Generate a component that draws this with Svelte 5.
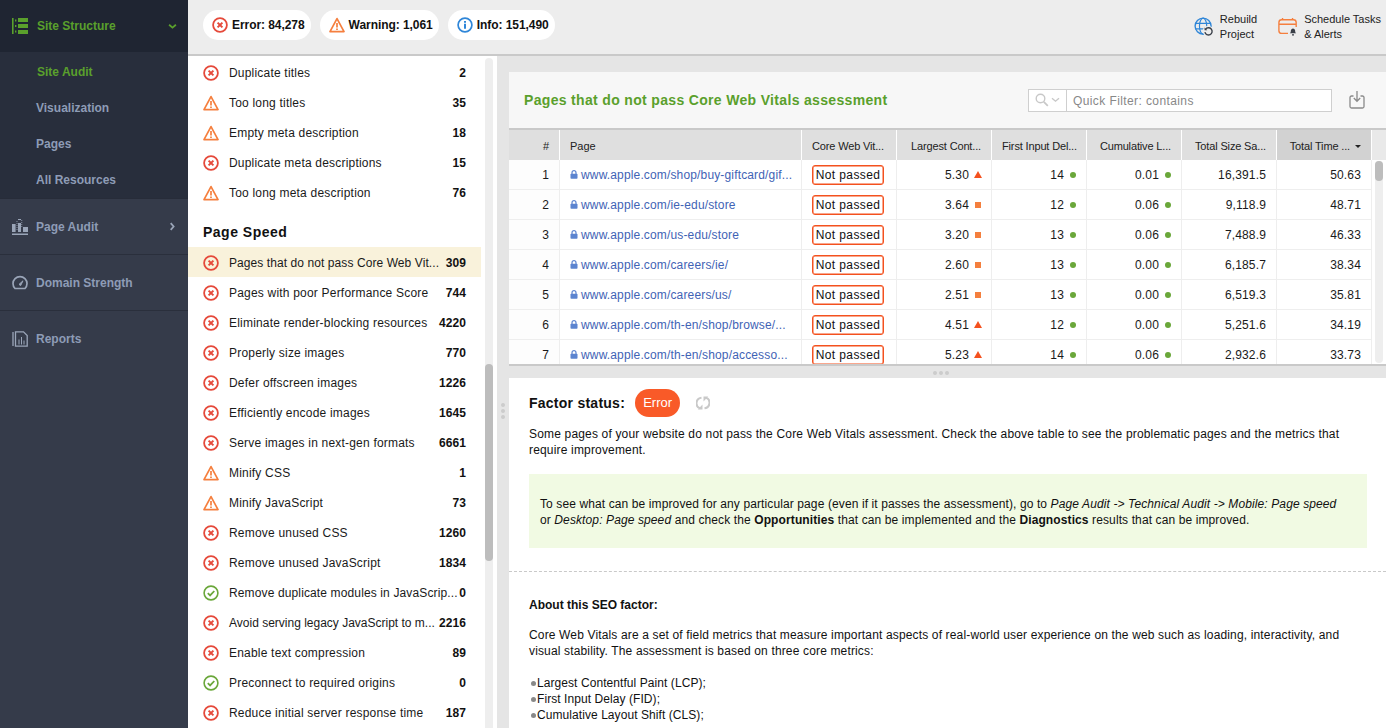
<script>
  const top = [
    { k: 'e', t: 'Duplicate titles', n: '2' },
    { k: 'w', t: 'Too long titles', n: '35' },
    { k: 'w', t: 'Empty meta description', n: '18' },
    { k: 'e', t: 'Duplicate meta descriptions', n: '15' },
    { k: 'w', t: 'Too long meta description', n: '76' }
  ];
  const speed = [
    { k: 'e', t: 'Pages that do not pass Core Web Vit...', n: '309', sel: true, fit: 'tight' },
    { k: 'e', t: 'Pages with poor Performance Score', n: '744' },
    { k: 'e', t: 'Eliminate render-blocking resources', n: '4220' },
    { k: 'e', t: 'Properly size images', n: '770' },
    { k: 'e', t: 'Defer offscreen images', n: '1226' },
    { k: 'e', t: 'Efficiently encode images', n: '1645' },
    { k: 'e', t: 'Serve images in next-gen formats', n: '6661' },
    { k: 'w', t: 'Minify CSS', n: '1' },
    { k: 'w', t: 'Minify JavaScript', n: '73' },
    { k: 'e', t: 'Remove unused CSS', n: '1260' },
    { k: 'e', t: 'Remove unused JavaScript', n: '1834' },
    { k: 'o', t: 'Remove duplicate modules in JavaScrip...', n: '0', fit: 'mid' },
    { k: 'e', t: 'Avoid serving legacy JavaScript to m...', n: '2216', fit: 'none' },
    { k: 'e', t: 'Enable text compression', n: '89' },
    { k: 'o', t: 'Preconnect to required origins', n: '0' },
    { k: 'e', t: 'Reduce initial server response time', n: '187' }
  ];
  const rows = [
    ['www.apple.com/shop/buy-giftcard/gif...', '5.30', 't', '14', '0.01', '16,391.5', '50.63'],
    ['www.apple.com/ie-edu/store', '3.64', 's', '12', '0.06', '9,118.9', '48.71'],
    ['www.apple.com/us-edu/store', '3.20', 's', '13', '0.06', '7,488.9', '46.33'],
    ['www.apple.com/careers/ie/', '2.60', 's', '13', '0.00', '6,185.7', '38.34'],
    ['www.apple.com/careers/us/', '2.51', 's', '13', '0.00', '6,519.3', '35.81'],
    ['www.apple.com/th-en/shop/browse/...', '4.51', 't', '12', '0.00', '5,251.6', '34.19'],
    ['www.apple.com/th-en/shop/accesso...', '5.23', 't', '14', '0.06', '2,932.6', '33.73']
  ];
</script>

{#snippet icon(k)}
  {#if k === 'e'}
    <svg class="ic" viewBox="0 0 16 16"><circle cx="8" cy="8" r="6.900" fill="none" stroke="#e5493a" stroke-width="1.800"/><path d="M5.600 5.600l4.800 4.800M10.400 5.600l-4.800 4.800" stroke="#e5493a" stroke-width="2" fill="none"/></svg>
  {:else if k === 'w'}
    <svg class="ic" viewBox="0 0 16 16"><path d="M8 1.600L15 14.600H1z" fill="none" stroke="#f57f3e" stroke-width="1.700" stroke-linejoin="round"/><path d="M8 6v4.400M8 11.400v1.600" stroke="#f57f3e" stroke-width="1.700" fill="none"/></svg>
  {:else if k === 'o'}
    <svg class="ic" viewBox="0 0 16 16"><circle cx="8" cy="8" r="6.900" fill="none" stroke="#6aa73a" stroke-width="1.600"/><path d="M4.800 8.100l2.300 2.300 4.200-4.400" stroke="#6aa73a" stroke-width="1.800" fill="none"/></svg>
  {:else}
    <svg class="ic" viewBox="0 0 16 16"><circle cx="8" cy="8" r="6.900" fill="none" stroke="#2f86d8" stroke-width="1.700"/><path d="M8 6.800v5M8 4v1.800" stroke="#2f86d8" stroke-width="2" fill="none"/></svg>
  {/if}
{/snippet}

{#snippet row(item)}
  <li class="item" class:sel={item.sel}>
    {@render icon(item.k)}
    <span class="lbl {item.fit ?? ''}">{item.t}</span>
    <b class="num">{item.n}</b>
  </li>
{/snippet}

<div class="app">
  <aside class="side">
    <div class="head">
      <svg class="nic" viewBox="0 0 16 16"><path d="M0 0h1.600v16H0zM3 1.500h1.400v2H3zM3 7h1.400v2H3zM3 12.500h1.400v2H3zM6 0h10v4H6zM6 6h10v4H6zM6 12h10v4H6z" fill="#5aa02c"/></svg>
      <span class="hl">Site Structure</span>
      <svg class="chev" viewBox="0 0 8 6"><path d="M1 1.400l3 2.600 3-2.600" fill="none" stroke="#5aa02c" stroke-width="1.600"/></svg>
    </div>
    <nav class="sub">
      <a class="on">Site Audit</a>
      <a>Visualization</a>
      <a>Pages</a>
      <a>All Resources</a>
    </nav>
    <div class="nav">
      <svg class="nic" viewBox="0 0 16 16"><path d="M0 5h3.600v8H0zM4.600 2h.8v1h-.8zM4.600 4h.8v1h-.8zM4.600 6h.8v1h-.8zM4.600 8h.8v1h-.8zM4.600 10h.8v1h-.8zM9.400 1h.8v1h-.8zM9.400 3h.8v1h-.8zM9.400 5h.8v1h-.8zM9.400 7h.8v1h-.8zM6 0h3v1H6zM6 4h3v9H6zM11 8h5v5h-5zM0 14.400h16V16H0z" fill="#9aa5b8"/></svg>
      <span>Page Audit</span>
      <svg class="chev" viewBox="0 0 6 8"><path d="M1.400 1l2.600 3-2.600 3" fill="none" stroke="#9aa5b8" stroke-width="1.600"/></svg>
    </div>
    <div class="nav">
      <svg class="nic" viewBox="0 0 16 16"><path d="M3 13.500a7 7 0 1 1 10 0z" fill="none" stroke="#9aa5b8" stroke-width="1.700"/><path d="M7 9.400l4-3.600-2.400 4.800z" fill="#9aa5b8" stroke="#9aa5b8"/></svg>
      <span>Domain Strength</span>
    </div>
    <div class="nav last">
      <svg class="nic" viewBox="0 0 16 16"><path d="M1 1v14M3.500.8h8L15.200 4.500v10.700H3.500z" fill="none" stroke="#9aa5b8" stroke-width="1.300"/><path d="M6.500 8.500h1v5h-1zM9 6h1v7.500H9zM11.500 9.500h1v4h-1z" fill="#9aa5b8"/></svg>
      <span>Reports</span>
    </div>
  </aside>

  <main class="main">
    <header class="bar">
      <div class="pill">{@render icon('e')}<span>Error: 84,278</span></div>
      <div class="pill">{@render icon('w')}<span>Warning: 1,061</span></div>
      <div class="pill">{@render icon('i')}<span>Info: 151,490</span></div>
      <div class="tools">
        <div class="tool">
          <svg class="tic" viewBox="0 0 22 22"><circle cx="10" cy="10" r="8.800" fill="none" stroke="#2f86d8" stroke-width="1.500"/><ellipse cx="10" cy="10" rx="4" ry="8.800" fill="none" stroke="#2f86d8" stroke-width="1.300"/><path d="M1.600 7h16.800M1.600 13h16.800" stroke="#2f86d8" stroke-width="1.300"/><circle cx="15.500" cy="15.500" r="6" fill="#ededed"/><path d="M12.600 13.600a4 4 0 1 1-.6 3" fill="none" stroke="#3a3f48" stroke-width="1.500"/><path d="M11.600 11.600v3h3z" fill="#3a3f48"/></svg>
          <span>Rebuild<br />Project</span>
        </div>
        <div class="tool">
          <svg class="tic" viewBox="0 0 22 22"><path d="M11 18H4a3 3 0 0 1-3-3V6a3 3 0 0 1 3-3h13a3 3 0 0 1 3 3v5M1 8h19M5 1v2M16 1v2" fill="none" stroke="#f57f3e" stroke-width="1.500"/><path d="M13 18c1.200-1 1-2 1.200-3.500a2.400 2.400 0 0 1 4.600 0c.2 1.500 0 2.500 1.200 3.500zM15.400 19h2.200v1.400h-2.200z" fill="#3a3f48"/></svg>
          <span>Schedule Tasks<br />&amp; Alerts</span>
        </div>
      </div>
    </header>

    <div class="body">
      <section class="left">
        <div class="list">
          <ul>{#each top as item}{@render row(item)}{/each}</ul>
          <h3>Page Speed</h3>
          <ul>{#each speed as item}{@render row(item)}{/each}</ul>
        </div>
        <div class="track"><div class="thumb"></div></div>
      </section>

      <div class="gutter"><i></i><i></i><i></i></div>

      <section class="right">
        <div class="card">
          <h2>Pages that do not pass Core Web Vitals assessment</h2>
          <div class="filter">
            <div class="fic">
              <svg width="14" height="14" viewBox="0 0 14 14"><circle cx="5.500" cy="5.500" r="4.300" fill="none" stroke="#c8c8c8" stroke-width="1.400"/><path d="M8.800 8.800l4 4" stroke="#c8c8c8" stroke-width="1.800"/></svg>
              <svg width="9" height="6" viewBox="0 0 9 6"><path d="M1 1.200l3.500 3 3.500-3" fill="none" stroke="#c8c8c8" stroke-width="1.400"/></svg>
            </div>
            <span class="ph">Quick Filter: contains</span>
          </div>
          <svg class="export" viewBox="0 0 16 20"><path d="M4.500 6H2.500A1.500 1.500 0 0 0 1 7.500v9A1.500 1.500 0 0 0 2.500 18h11a1.500 1.500 0 0 0 1.500-1.500v-9A1.500 1.500 0 0 0 13.500 6h-2" fill="none" stroke="#8a8a8a" stroke-width="1.300"/><path d="M8 1v10M4.800 8L8 11.300 11.200 8" fill="none" stroke="#8a8a8a" stroke-width="1.300"/></svg>
        </div>

        <div class="tablewrap">
          <div class="tablebox">
            <table>
              <colgroup>
                <col class="c0" /><col class="c1" /><col class="c2" /><col class="c3" /><col class="c3" /><col class="c3" /><col class="c3" /><col class="c3" />
              </colgroup>
              <thead>
                <tr>
                  <th class="r">#</th>
                  <th class="l">Page</th>
                  <th class="l">Core Web Vit...</th>
                  <th class="r">Largest Cont...</th>
                  <th class="r">First Input Del...</th>
                  <th class="r">Cumulative L...</th>
                  <th class="r">Total Size Sa...</th>
                  <th class="r sorted">Total Time ...<span class="caret"></span></th>
                </tr>
              </thead>
              <tbody>
                {#each rows as r, i}
                  <tr>
                    <td class="r idx">{i + 1}</td>
                    <td class="l url">
                      <svg class="lock" viewBox="0 0 8 9"><path d="M2 4V2.700a2 2 0 0 1 4 0V4" fill="none" stroke="#5b84d0" stroke-width="1.200"/><rect x="0.500" y="3.800" width="7" height="5" rx="0.800" fill="#5b84d0"/></svg>{r[0]}
                    </td>
                    <td class="l"><span class="badge">Not passed</span></td>
                    <td class="r">{r[1]}<span class="mk"><span class={r[2] === 't' ? 'tri' : 'sq'}></span></span></td>
                    <td class="r">{r[3]}<span class="mk"><span class="dot"></span></span></td>
                    <td class="r">{r[4]}<span class="mk"><span class="dot"></span></span></td>
                    <td class="r">{r[5]}</td>
                    <td class="r">{r[6]}</td>
                  </tr>
                {/each}
              </tbody>
            </table>
          </div>
          <div class="vbar"><div class="vhead"></div><div class="vtrack"><div class="vthumb"></div></div></div>
        </div>

        <div class="split"><i></i><i></i><i></i></div>

        <div class="detail">
          <div class="status">
            <strong>Factor status:</strong>
            <span class="err">Error</span>
            <svg class="sync" viewBox="0 0 14 14"><path d="M4 12.400A5.500 5.500 0 0 1 5.500 1.800M10 1.600A5.500 5.500 0 0 1 8.500 12.200" fill="none" stroke="#c9c9c9" stroke-width="2"/><path d="M6.500 8.500v5H1.800zM7.500 5.500V.5h4.700z" fill="#c9c9c9"/></svg>
          </div>
          <p class="intro">Some pages of your website do not pass the Core Web Vitals assessment. Check the above table to see the problematic pages and the metrics that<br />require improvement.</p>
          <div class="note">To see what can be improved for any particular page (even if it passes the assessment), go to <em>Page Audit -&gt; Technical Audit -&gt; Mobile: Page speed</em><br />or <em>Desktop: Page speed</em> and check the <b>Opportunities</b> that can be implemented and the <b>Diagnostics</b> results that can be improved.</div>
          <div class="dash"></div>
          <div class="about">
            <b>About this SEO factor:</b>
            <p>Core Web Vitals are a set of field metrics that measure important aspects of real-world user experience on the web such as loading, interactivity, and<br />visual stability. The assessment is based on three core metrics:</p>
            <ul class="bul">
              <li>Largest Contentful Paint (LCP);</li>
              <li>First Input Delay (FID);</li>
              <li>Cumulative Layout Shift (CLS);</li>
            </ul>
          </div>
        </div>
      </section>
    </div>
  </main>
</div>

<style>
  :global(body) { margin: 0; overflow: hidden; background: #fff; }
  .app {
    display: flex; width: 1386px; height: 728px; overflow: hidden;
    font-family: "Liberation Sans", Arial, sans-serif; font-size: 12px; color: #111;
  }
  ul { list-style: none; margin: 0; padding: 0; }

  .side { width: 188px; flex: none; background: #353b4a; font-weight: 700; color: #8e9cb6; }
  .head { height: 52px; background: #1f2532; display: flex; align-items: center; padding: 0 11px 0 12px; gap: 9px; color: #5aa02c; box-sizing: border-box; }
  .hl { flex: 1; }
  .nic { width: 16px; height: 16px; flex: none; }
  .chev { width: 9px; height: 9px; }
  .sub { background: #282e3c; height: 147px; display: flex; flex-direction: column; box-sizing: border-box; border-bottom: 1px solid #272c39; }
  .sub a { height: 36px; line-height: 40px; padding-left: 36px; flex: none; }
  .sub a.on { color: #5aa02c; padding-left: 37px; }
  .nav { height: 56px; display: flex; align-items: center; gap: 8px; padding: 0 11px 0 12px; box-sizing: border-box; border-bottom: 1px solid #2a2f3c; }
  .nav.last { border-bottom: 0; }
  .nav span { flex: 1; }

  .main { flex: 1; min-width: 0; display: flex; flex-direction: column; }
  .bar { height: 56px; flex: none; box-sizing: border-box; background: #ededed; border-bottom: 2px solid #c9c9c9; display: flex; align-items: flex-start; padding: 10px 5px 0 15px; gap: 9px; }
  .pill { height: 30px; background: #fff; border-radius: 15px; display: flex; align-items: center; gap: 4px; padding: 0 6px 0 9px; font-weight: 700; letter-spacing: -0.06px; }
  .ic { width: 16px; height: 16px; flex: none; }
  .tools { margin-left: auto; display: flex; gap: 21px; margin-top: 2px; }
  .tool { display: flex; align-items: center; gap: 6px; font-size: 11px; line-height: 15px; color: #222; }
  .tic { width: 20px; height: 20px; }

  .body { flex: 1; min-height: 0; display: flex; }
  .left { width: 309px; flex: none; display: flex; background: #fff; overflow: hidden; }
  .list { width: 293px; margin-right: 4px; flex: none; padding-top: 1px; }
  .item { height: 30px; display: flex; align-items: center; padding: 1px 15px 0 15px; box-sizing: border-box; }
  .item.sel { background: #f9f2db; }
  .lbl { margin-left: 10px; flex: 1; white-space: nowrap; color: #1a1a1a; letter-spacing: 0.2px; }
  .lbl.tight { letter-spacing: 0.08px; }
  .lbl.mid { letter-spacing: 0.13px; }
  .lbl.none { letter-spacing: 0; }
  .num { font-weight: 700; letter-spacing: 0.1px; }
  h3 { font-size: 14px; margin: 0; height: 40px; line-height: 50px; padding-left: 15px; font-weight: 700; color: #111; letter-spacing: 0.5px; }
  .track { width: 8px; background: #eeeeee; margin-top: 2px; border-radius: 4px 4px 0 0; }
  .thumb { width: 8px; height: 197px; margin-top: 306px; background: #bdbdbd; border-radius: 4px; }

  .gutter { width: 12px; flex: none; background: #e5e5e5; display: flex; flex-direction: column; align-items: center; gap: 2px; padding-top: 347px; box-sizing: border-box; }
  .gutter i, .split i { width: 4px; height: 4px; border-radius: 50%; background: #cccccc; display: block; }

  .right { flex: 1; min-width: 0; display: flex; flex-direction: column; background: #e5e5e5; padding-top: 16px; }
  .card { height: 58px; flex: none; box-sizing: border-box; background: #f7f7f7; border-bottom: 2px solid #c9c9c9; display: flex; align-items: center; padding: 0 21px 0 15px; }
  h2 { margin: 0; font-size: 14px; font-weight: 700; color: #5aa02c; flex: 1; white-space: nowrap; letter-spacing: 0.33px; }
  .filter { width: 304px; height: 23px; box-sizing: border-box; border: 1px solid #cfcfcf; background: #fff; display: flex; align-items: center; }
  .fic { width: 37px; height: 21px; border-right: 1px solid #cfcfcf; display: flex; align-items: center; justify-content: center; gap: 2px; }
  .ph { color: #888; padding: 1px 0 0 6px; letter-spacing: 0.4px; }
  .export { width: 16px; height: 20px; margin-left: 17px; }

  .tablewrap { height: 236px; flex: none; box-sizing: border-box; background: #fff; border-bottom: 2px solid #c9c9c9; display: flex; overflow: hidden; }
  .tablebox { width: 863px; flex: none; overflow: hidden; }
  table { border-collapse: separate; border-spacing: 0; table-layout: fixed; width: 863px; }
  .c0 { width: 51px; } .c1 { width: 242px; } .c2 { width: 95px; } .c3 { width: 95px; }
  th { height: 30px; background: #dfdfdf; font-weight: 400; font-size: 11px; padding: 1px 10px 0; box-sizing: border-box; border-right: 1px solid #fff; white-space: nowrap; overflow: hidden; color: #222; letter-spacing: -0.15px; }
  th.l:nth-child(2), th.r:first-child { letter-spacing: 0; }
  th.sorted { background: #d2d2d2; }
  .caret { display: inline-block; width: 0; height: 0; border: 3px solid transparent; border-top: 3.500px solid #222; border-bottom: 0; margin-left: 5px; vertical-align: 2px; }
  td { height: 30px; padding: 0 10px; box-sizing: border-box; border-right: 1px solid #eeeeee; border-bottom: 1px solid #eeeeee; white-space: nowrap; overflow: hidden; color: #1a1a1a; letter-spacing: 0.15px; }
  td.idx { background: #fdfdfd; }
  .r { text-align: right; }
  .l { text-align: left; }
  td.url { color: #3f63b5; }
  .lock { width: 8px; height: 9px; margin-right: 3px; }
  .badge { display: inline-block; height: 20px; width: 72px; box-sizing: border-box; border: 1px solid #f4511e; box-shadow: inset 0 0 0 0.5px #f4511e; border-radius: 3px; line-height: 18px; text-align: center; font-size: 12px; letter-spacing: 0.4px; color: #111; vertical-align: middle; }
  .mk { display: inline-flex; width: 18px; justify-content: center; align-items: center; height: 10px; margin-right: -6px; vertical-align: 1px; }
  .tri { width: 0; height: 0; border-left: 4px solid transparent; border-right: 4px solid transparent; border-bottom: 7px solid #f4511e; }
  .sq { width: 6px; height: 6px; background: #f47f3e; }
  .dot { width: 6px; height: 6px; border-radius: 50%; background: #6aa73a; }
  .vbar { flex: 1; background: #fff; display: flex; flex-direction: column; }
  .vhead { height: 30px; background: #e9e9e9; flex: none; }
  .vtrack { width: 8px; height: 202px; margin: 1px 0 0 3px; background: #eeeeee; border-radius: 4px; }
  .vthumb { width: 8px; height: 20px; background: #bdbdbd; border-radius: 4px; }

  .split { height: 12px; flex: none; display: flex; align-items: center; justify-content: center; gap: 2px; padding: 1px 13px 0 0; box-sizing: border-box; }

  .detail { flex: 1; min-height: 0; background: #fff; overflow: hidden; }
  .status { display: flex; align-items: center; padding: 11px 0 0 20px; height: 28px; }
  .status strong { font-size: 14px; color: #111; letter-spacing: 0.25px; }
  .err { margin-left: 10px; width: 45px; height: 28px; line-height: 28px; border-radius: 14px; background: #f95a28; color: #fff; text-align: center; font-size: 13px; }
  .sync { width: 14px; height: 14px; margin-left: 16px; }
  .intro { margin: 9px 19px 0 20px; line-height: 16px; color: #111; letter-spacing: 0.17px; }
  .note { margin: 16px 19px 0 20px; height: 74px; box-sizing: border-box; background: #f1fae3; padding: 22px 11px 0; line-height: 16px; color: #111; letter-spacing: 0.11px; }
  .dash { margin-top: 23px; border-top: 1px dashed #c9c9c9; }
  .about { padding: 25px 0 0 20px; line-height: 16px; }
  .about p { margin: 14px 19px 0 0; letter-spacing: 0.15px; }
  .bul { margin-top: 16px; letter-spacing: 0.07px; }
  .bul li { display: flex; align-items: center; }
  .bul li::before { content: ""; width: 5px; height: 5px; border-radius: 50%; background: #888; margin: 0 1px 0 2px; }
</style>
